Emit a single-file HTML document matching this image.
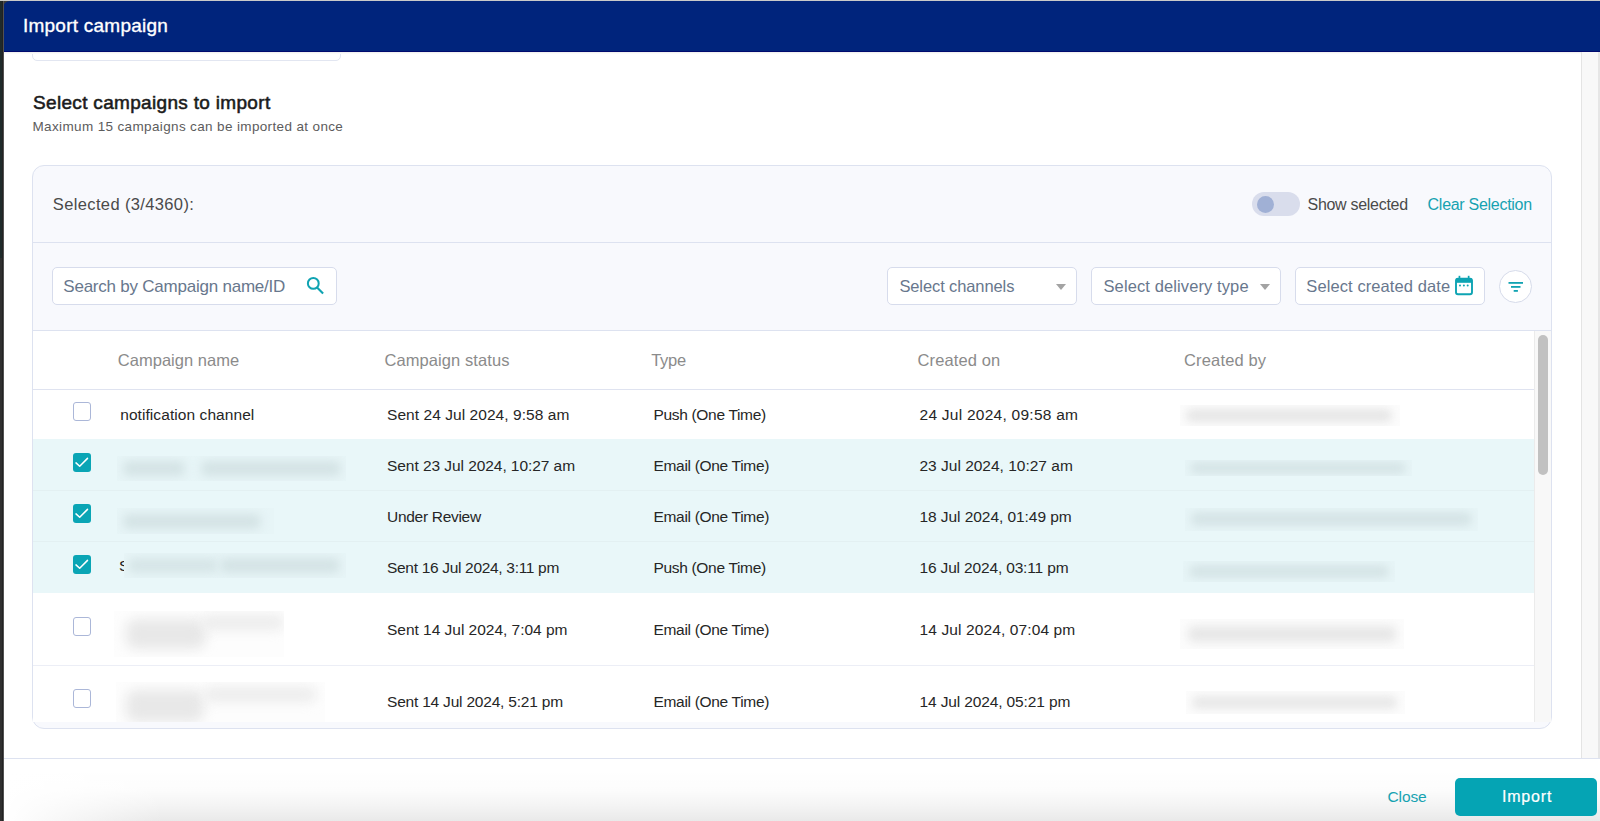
<!DOCTYPE html>
<html><head><meta charset="utf-8">
<style>
*{box-sizing:border-box;margin:0;padding:0}
html,body{width:1600px;height:821px;overflow:hidden;background:#fff;font-family:"Liberation Sans",sans-serif;position:relative}
.a{position:absolute}
.tx{position:absolute;white-space:nowrap}
#topline{left:0;top:0;width:1600px;height:1px;background:#c9c9c9}
#ls1{left:0;top:0;width:3px;height:258px;background:#1f2a2a}
#ls2{left:0;top:258px;width:3px;height:563px;background:#2f2f2f}
#ls3{left:2px;top:0;width:2px;height:821px;background:linear-gradient(90deg,#0a0a0a,#6a6a6a)}
#header{left:3px;top:1px;width:1597px;height:51px;background:#00247c;border-top-left-radius:7px;border-bottom:1px solid #000a6e}
#prevbox{left:32px;top:40px;width:308.5px;height:20.6px;border:1.4px solid #e2e6f1;border-radius:5px;background:#fff}
#pgscroll{left:1581px;top:52px;width:19px;height:706px;background:#f8f8f8;border-left:1px solid #e4e4e4}
#pgscroll2{left:1598px;top:52px;width:2px;height:706px;background:#e6e6e6}
#card{left:32px;top:165px;width:1520px;height:564px;border:1px solid #dde2f0;border-radius:12px;background:#f8f9fd;overflow:hidden}
.hline{position:absolute;height:1px}
.box{position:absolute;background:#fff;border:1px solid #d7dcec;border-radius:5px}
.arrow{position:absolute;width:0;height:0;border-left:5.5px solid transparent;border-right:5.5px solid transparent;border-top:6px solid #a3a3a3}
.row{position:absolute;left:33px;width:1501px}
.cb{position:absolute;left:72.5px;width:18.6px;height:18.6px;border:1.5px solid #abb7d8;border-radius:3px;background:#fff}
.cbc{position:absolute;left:72.5px;width:18.6px;height:18.6px;border-radius:3px;background:#0aa5b5}
.blk{position:absolute;overflow:hidden}
.bl{position:absolute;filter:blur(4px);border-radius:6px}
#footerline{left:4px;top:758px;width:1596px;height:1px;background:#dde2f0}
#shadow{left:4px;top:770px;width:1596px;height:51px;background:linear-gradient(180deg,rgba(0,0,0,0) 0%,rgba(0,0,0,0.012) 40%,rgba(0,0,0,0.05) 75%,rgba(0,0,0,0.085) 100%)}
#shadowmask{left:4px;top:760px;width:160px;height:61px;background:linear-gradient(90deg,rgba(255,255,255,1),rgba(255,255,255,0))}
#importbtn{left:1455px;top:778px;width:142px;height:38px;background:#05a4b4;border-radius:5px}
</style></head>
<body>
<div class="a" style="left:3px;top:1px;width:10px;height:10px;background:#3a3a3a"></div>
<div id="prevbox" class="a"></div>
<div id="header2" class="a" style="left:3px;top:1px;width:1597px;height:51px;background:#00247c;border-top-left-radius:7px;border-bottom:1px solid #000a6e"></div>
<div class="a" style="left:4px;top:52px;width:1596px;height:2px;background:linear-gradient(180deg,#ececec,#ffffff)"></div>
<div id="pgscroll" class="a"></div>
<div id="pgscroll2" class="a"></div>

<div id="card" class="a"></div>
<!-- selected bar divider -->
<div class="hline" style="left:33px;top:242px;width:1518px;background:#dde2f0"></div>
<!-- toggle -->
<div class="a" style="left:1252px;top:192px;width:48px;height:24px;border-radius:12px;background:#d9ddec"></div>
<div class="a" style="left:1256.5px;top:195.5px;width:17px;height:17px;border-radius:50%;background:#a0b0d5"></div>

<!-- filter row -->
<div class="box" style="left:52px;top:267px;width:285px;height:38px"></div>
<svg class="a" style="left:305px;top:276px" width="22" height="20" viewBox="0 0 22 20">
  <circle cx="8.3" cy="7.4" r="5.4" fill="none" stroke="#0fa3b2" stroke-width="2"/>
  <line x1="11.8" y1="11.2" x2="18.1" y2="17.6" stroke="#0fa3b2" stroke-width="2.1" stroke-linecap="butt"/>
</svg>
<div class="box" style="left:887px;top:267px;width:190px;height:38px"></div>
<div class="arrow" style="left:1056px;top:284px"></div>
<div class="box" style="left:1091px;top:267px;width:190px;height:38px"></div>
<div class="arrow" style="left:1260px;top:284px"></div>
<div class="box" style="left:1295px;top:267px;width:190px;height:38px"></div>
<svg class="a" style="left:1454px;top:275px" width="20" height="21" viewBox="0 0 20 21">
  <rect x="2" y="3.6" width="16" height="15.6" rx="2" fill="none" stroke="#0ea4b3" stroke-width="1.9"/>
  <rect x="2" y="3.6" width="16" height="4.2" fill="#0ea4b3"/>
  <rect x="4.6" y="0.8" width="1.7" height="3.5" fill="#0ea4b3"/>
  <rect x="13.8" y="0.8" width="1.7" height="3.5" fill="#0ea4b3"/>
  <circle cx="6" cy="10.6" r="1" fill="#0ea4b3"/>
  <circle cx="9.9" cy="10.6" r="1" fill="#0ea4b3"/>
  <circle cx="13.7" cy="10.6" r="1" fill="#0ea4b3"/>
</svg>
<div class="a" style="left:1499px;top:270px;width:33px;height:33px;border-radius:50%;border:1.3px solid #d6dbea;background:#ffffff"></div>
<svg class="a" style="left:1505px;top:279px" width="22" height="16" viewBox="0 0 22 16">
  <rect x="3.5" y="3" width="14.5" height="1.8" fill="#12a3b2"/>
  <rect x="6" y="7" width="9.5" height="1.8" fill="#12a3b2"/>
  <rect x="8.7" y="11" width="4.2" height="1.8" fill="#12a3b2"/>
</svg>
<div class="hline" style="left:33px;top:330px;width:1518px;background:#dde2f0"></div>

<!-- table -->
<div class="a" style="left:33px;top:331px;width:1501px;height:391px;background:#fff"></div>
<div class="hline" style="left:33px;top:389px;width:1501px;background:#dfe3f0"></div>
<div class="row" style="top:439px;height:154px;background:#e9f7f9"></div>
<div class="hline" style="left:33px;top:490px;width:1501px;background:#e3f0f2"></div>
<div class="hline" style="left:33px;top:541px;width:1501px;background:#e3f0f2"></div>
<div class="hline" style="left:33px;top:665px;width:1501px;background:#eceef6"></div>
<!-- table scrollbar -->
<div class="a" style="left:1534px;top:331px;width:17px;height:391px;background:#f8f8f8;border-left:1px solid #ebebeb"></div>
<div class="a" style="left:1538px;top:335px;width:10px;height:140px;border-radius:5px;background:#c1c1c1"></div>

<!-- checkboxes -->
<div class="cb" style="top:402px"></div>
<div class="cbc" style="top:453px"><svg width="18" height="18" viewBox="0 0 18 18" style="position:absolute;left:0;top:0"><path d="M3 9.9 L6.7 13.3 L14.5 5.4" fill="none" stroke="#fff" stroke-width="1.5" stroke-linecap="round" stroke-linejoin="round"/></svg></div>
<div class="cbc" style="top:504px"><svg width="18" height="18" viewBox="0 0 18 18" style="position:absolute;left:0;top:0"><path d="M3 9.9 L6.7 13.3 L14.5 5.4" fill="none" stroke="#fff" stroke-width="1.5" stroke-linecap="round" stroke-linejoin="round"/></svg></div>
<div class="cbc" style="top:555px"><svg width="18" height="18" viewBox="0 0 18 18" style="position:absolute;left:0;top:0"><path d="M3 9.9 L6.7 13.3 L14.5 5.4" fill="none" stroke="#fff" stroke-width="1.5" stroke-linecap="round" stroke-linejoin="round"/></svg></div>
<div class="cb" style="top:617px"></div>
<div class="cb" style="top:689px"></div>

<!-- blurred name blocks -->
<div class="blk" style="left:117px;top:456px;width:229px;height:25px;background:#e7f5f7">
  <div class="bl" style="left:6px;top:5px;width:62px;height:15px;background:#d4e3e5;filter:blur(5px)"></div>
  <div class="bl" style="left:84px;top:5px;width:140px;height:15px;background:#d4e3e5;filter:blur(5px)"></div>
</div>
<div class="blk" style="left:117px;top:508px;width:157px;height:26px;background:#e7f5f7">
  <div class="bl" style="left:6px;top:6px;width:138px;height:15px;background:#d4e3e5;filter:blur(5px)"></div>
</div>
<div class="tx" style="left:119px;top:558px;font-size:15.5px;line-height:15.5px;color:#202020">S</div>
<div class="blk" style="left:124px;top:553px;width:222px;height:25px;background:#e7f5f7">
  <div class="bl" style="left:4px;top:5px;width:90px;height:15px;background:#d6e5e7;filter:blur(5px)"></div>
  <div class="bl" style="left:96px;top:5px;width:120px;height:15px;background:#d4e3e5;filter:blur(5px)"></div>
</div>
<div class="blk" style="left:114px;top:611px;width:170px;height:46px;background:#fdfdfd">
  <div class="bl" style="left:12px;top:8px;width:80px;height:30px;background:#e8e8e8;filter:blur(6px);border-radius:10px"></div>
  <div class="bl" style="left:88px;top:4px;width:82px;height:15px;background:#ececec;filter:blur(6px)"></div>
</div>
<div class="blk" style="left:116px;top:682px;width:209px;height:40px;background:#fdfdfd">
  <div class="bl" style="left:10px;top:8px;width:78px;height:32px;background:#e8e8e8;filter:blur(6px);border-radius:10px"></div>
  <div class="bl" style="left:88px;top:5px;width:112px;height:15px;background:#ececec;filter:blur(6px)"></div>
</div>
<!-- blurred created-by blocks -->
<div class="blk" style="left:1180px;top:405px;width:220px;height:21px;background:#fcfcfc">
  <div class="bl" style="left:6px;top:4px;width:206px;height:13px;background:#e6e6e6;filter:blur(4.5px)"></div>
</div>
<div class="blk" style="left:1185px;top:460px;width:227px;height:16px;background:#e7f5f7">
  <div class="bl" style="left:5px;top:2px;width:216px;height:12px;background:#d5e4e6;filter:blur(4px)"></div>
</div>
<div class="blk" style="left:1185px;top:508px;width:293px;height:23px;background:#e7f5f7">
  <div class="bl" style="left:6px;top:4px;width:281px;height:14px;background:#d5e4e6;filter:blur(4.5px)"></div>
</div>
<div class="blk" style="left:1183px;top:561px;width:212px;height:21px;background:#e7f5f7">
  <div class="bl" style="left:6px;top:4px;width:200px;height:13px;background:#d5e4e6;filter:blur(4.5px)"></div>
</div>
<div class="blk" style="left:1180px;top:619px;width:224px;height:30px;background:#fcfcfc">
  <div class="bl" style="left:8px;top:7px;width:208px;height:16px;background:#e7e7e7;filter:blur(5px)"></div>
</div>
<div class="blk" style="left:1186px;top:691px;width:219px;height:23px;background:#fcfcfc">
  <div class="bl" style="left:6px;top:5px;width:205px;height:13px;background:#e8e8e8;filter:blur(4.5px)"></div>
</div>

<!-- footer -->
<div id="footerline" class="a"></div>
<div id="shadow" class="a"></div>
<div id="shadowmask" class="a"></div>
<div id="importbtn" class="a"></div>

<div id="ls1" class="a"></div>
<div id="ls2" class="a"></div>
<div id="ls3" class="a"></div>
<div id="topline" class="a"></div>
<div class="tx" style="left:22.90px;top:16.42px;font-size:19px;line-height:19px;color:#ffffff;font-weight:400;letter-spacing:0.250px;-webkit-text-stroke:0.35px #ffffff;">Import campaign</div>
<div class="tx" style="left:33.00px;top:92.92px;font-size:19px;line-height:19px;color:#1b1b1b;font-weight:400;letter-spacing:0.320px;-webkit-text-stroke:0.55px #1b1b1b;">Select campaigns to import</div>
<div class="tx" style="left:32.50px;top:119.57px;font-size:13.5px;line-height:13.5px;color:#5c5c5c;font-weight:400;letter-spacing:0.360px;">Maximum 15 campaigns can be imported at once</div>
<div class="tx" style="left:52.80px;top:195.63px;font-size:16.5px;line-height:16.5px;color:#4a4a4a;font-weight:400;letter-spacing:0.365px;">Selected (3/4360):</div>
<div class="tx" style="left:1307.50px;top:196.76px;font-size:16px;line-height:16px;color:#4a4a4a;font-weight:400;letter-spacing:-0.292px;">Show selected</div>
<div class="tx" style="left:1427.60px;top:196.76px;font-size:16px;line-height:16px;color:#16a2b1;font-weight:400;letter-spacing:-0.286px;">Clear Selection</div>
<div class="tx" style="left:63.30px;top:277.81px;font-size:17px;line-height:17px;color:#68778d;font-weight:400;letter-spacing:-0.228px;">Search by Campaign name/ID</div>
<div class="tx" style="left:899.40px;top:277.83px;font-size:16.5px;line-height:16.5px;color:#68778d;font-weight:400;letter-spacing:-0.107px;">Select channels</div>
<div class="tx" style="left:1103.50px;top:277.53px;font-size:16.5px;line-height:16.5px;color:#68778d;font-weight:400;letter-spacing:0.105px;">Select delivery type</div>
<div class="tx" style="left:1306.30px;top:277.83px;font-size:16.5px;line-height:16.5px;color:#68778d;font-weight:400;letter-spacing:0.094px;">Select created date</div>
<div class="tx" style="left:117.80px;top:351.83px;font-size:16.5px;line-height:16.5px;color:#8b8b8b;font-weight:400;letter-spacing:0.017px;">Campaign name</div>
<div class="tx" style="left:384.40px;top:351.83px;font-size:16.5px;line-height:16.5px;color:#8b8b8b;font-weight:400;letter-spacing:0.086px;">Campaign status</div>
<div class="tx" style="left:651.20px;top:351.83px;font-size:16.5px;line-height:16.5px;color:#8b8b8b;font-weight:400;letter-spacing:-0.300px;">Type</div>
<div class="tx" style="left:917.50px;top:351.83px;font-size:16.5px;line-height:16.5px;color:#8b8b8b;font-weight:400;letter-spacing:0.122px;">Created on</div>
<div class="tx" style="left:1184.00px;top:351.83px;font-size:16.5px;line-height:16.5px;color:#8b8b8b;font-weight:400;letter-spacing:0.156px;">Created by</div>
<div class="tx" style="left:120.20px;top:407.08px;font-size:15.5px;line-height:15.5px;color:#262626;font-weight:400;letter-spacing:0.074px;">notification channel</div>
<div class="tx" style="left:387.00px;top:407.08px;font-size:15.5px;line-height:15.5px;color:#262626;font-weight:400;letter-spacing:0.058px;">Sent 24 Jul 2024, 9:58 am</div>
<div class="tx" style="left:653.50px;top:407.08px;font-size:15.5px;line-height:15.5px;color:#262626;font-weight:400;letter-spacing:-0.321px;">Push (One Time)</div>
<div class="tx" style="left:919.50px;top:407.08px;font-size:15.5px;line-height:15.5px;color:#262626;font-weight:400;letter-spacing:0.255px;">24 Jul 2024, 09:58 am</div>
<div class="tx" style="left:387.00px;top:458.08px;font-size:15.5px;line-height:15.5px;color:#262626;font-weight:400;letter-spacing:-0.060px;">Sent 23 Jul 2024, 10:27 am</div>
<div class="tx" style="left:653.50px;top:458.08px;font-size:15.5px;line-height:15.5px;color:#262626;font-weight:400;letter-spacing:-0.313px;">Email (One Time)</div>
<div class="tx" style="left:919.50px;top:458.08px;font-size:15.5px;line-height:15.5px;color:#262626;font-weight:400;letter-spacing:-0.005px;">23 Jul 2024, 10:27 am</div>
<div class="tx" style="left:387.00px;top:509.08px;font-size:15.5px;line-height:15.5px;color:#262626;font-weight:400;letter-spacing:-0.291px;">Under Review</div>
<div class="tx" style="left:653.50px;top:509.08px;font-size:15.5px;line-height:15.5px;color:#262626;font-weight:400;letter-spacing:-0.313px;">Email (One Time)</div>
<div class="tx" style="left:919.50px;top:509.08px;font-size:15.5px;line-height:15.5px;color:#262626;font-weight:400;letter-spacing:-0.060px;">18 Jul 2024, 01:49 pm</div>
<div class="tx" style="left:387.00px;top:560.08px;font-size:15.5px;line-height:15.5px;color:#262626;font-weight:400;letter-spacing:-0.312px;">Sent 16 Jul 2024, 3:11 pm</div>
<div class="tx" style="left:653.50px;top:560.08px;font-size:15.5px;line-height:15.5px;color:#262626;font-weight:400;letter-spacing:-0.321px;">Push (One Time)</div>
<div class="tx" style="left:919.50px;top:560.08px;font-size:15.5px;line-height:15.5px;color:#262626;font-weight:400;letter-spacing:-0.160px;">16 Jul 2024, 03:11 pm</div>
<div class="tx" style="left:387.00px;top:621.88px;font-size:15.5px;line-height:15.5px;color:#262626;font-weight:400;letter-spacing:-0.021px;">Sent 14 Jul 2024, 7:04 pm</div>
<div class="tx" style="left:653.50px;top:621.88px;font-size:15.5px;line-height:15.5px;color:#262626;font-weight:400;letter-spacing:-0.313px;">Email (One Time)</div>
<div class="tx" style="left:919.50px;top:621.88px;font-size:15.5px;line-height:15.5px;color:#262626;font-weight:400;letter-spacing:0.115px;">14 Jul 2024, 07:04 pm</div>
<div class="tx" style="left:387.00px;top:694.38px;font-size:15.5px;line-height:15.5px;color:#262626;font-weight:400;letter-spacing:-0.204px;">Sent 14 Jul 2024, 5:21 pm</div>
<div class="tx" style="left:653.50px;top:694.38px;font-size:15.5px;line-height:15.5px;color:#262626;font-weight:400;letter-spacing:-0.313px;">Email (One Time)</div>
<div class="tx" style="left:919.50px;top:694.38px;font-size:15.5px;line-height:15.5px;color:#262626;font-weight:400;letter-spacing:-0.130px;">14 Jul 2024, 05:21 pm</div>
<div class="tx" style="left:1387.50px;top:789.18px;font-size:15.5px;line-height:15.5px;color:#16a2b1;font-weight:400;letter-spacing:-0.125px;">Close</div>
<div class="tx" style="left:1501.90px;top:788.76px;font-size:16px;line-height:16px;color:#ffffff;font-weight:400;letter-spacing:0.820px;-webkit-text-stroke:0.2px #ffffff;">Import</div>
</body></html>
